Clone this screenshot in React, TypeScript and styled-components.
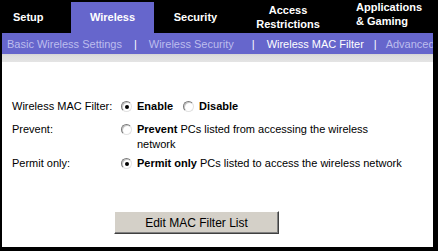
import React from "react";
import styled, { createGlobalStyle } from "styled-components";

const GlobalStyle = createGlobalStyle`
  html, body { margin: 0; padding: 0; background: #ffffff; }
  body { font-family: "Liberation Sans", Arial, sans-serif; }
  * { box-sizing: border-box; }
`;

const Page = styled.div`
  width: 438px;
  height: 251px;
  background: #000000;
  display: flex;
  flex-direction: column;
  overflow: hidden;
`;

const TabBar = styled.div`
  height: 33px;
  display: flex;
  align-items: flex-start;
  flex: none;
`;

const Tab = styled.div<{ $w: number; $active?: boolean; $pt: number; $align?: string; $pl?: number }>`
  width: ${(p) => p.$w}px;
  height: ${(p) => (p.$active ? 31 : 33)}px;
  margin-top: ${(p) => (p.$active ? 2 : 0)}px;
  padding-top: ${(p) => p.$pt}px;
  padding-left: ${(p) => p.$pl ?? 0}px;
  text-align: ${(p) => p.$align ?? "center"};
  background: ${(p) => (p.$active ? "#6666cc" : "#000000")};
  color: #ffffff;
  font-weight: bold;
  font-size: 11px;
  line-height: ${(p) => (p.$pt < 8 ? 13.5 : 14)}px;
  white-space: nowrap;
  flex: none;
`;

const Body = styled.div`
  flex: 1;
  margin: 0 5px 4px 2px;
  background: #ffffff;
  display: flex;
  flex-direction: column;
`;

const SubNav = styled.div`
  height: 21px;
  background: #6666cc;
  display: flex;
  align-items: center;
  padding-left: 5px;
  font-size: 11px;
  line-height: 14px;
  white-space: nowrap;
  overflow: hidden;
  flex: none;
`;

const NavItem = styled.span<{ $current?: boolean }>`
  color: ${(p) => (p.$current ? "#ffffff" : "#bdbdee")};
`;

const Sep = styled.span<{ $l: number; $r: number }>`
  color: #ffffff;
  margin: 0 ${(p) => p.$r}px 0 ${(p) => p.$l}px;
`;

const Band = styled.div`
  height: 8px;
  flex: none;
  background: linear-gradient(#d4d4d4 0, #dedede 2px, #e4e4e4 100%);
`;

const Content = styled.div`
  padding: 37px 0 0 10px;
  font-size: 11px;
  line-height: 14px;
  color: #000000;
`;

const Row = styled.div<{ $mt: number; $lh?: number }>`
  display: grid;
  grid-template-columns: 109px 1fr;
  margin-top: ${(p) => p.$mt}px;
  line-height: ${(p) => p.$lh ?? 14}px;
`;

const Label = styled.div``;

const Control = styled.div`
  display: flex;
  align-items: flex-start;
`;

const Radio = styled.span<{ $checked?: boolean; $ml?: number }>`
  width: 11px;
  height: 11px;
  margin-top: 2px;
  margin-left: ${(p) => p.$ml ?? 0}px;
  margin-right: 5px;
  border-radius: 50%;
  background: #ffffff;
  border: 1px solid;
  border-color: #7a7a7a #e2e2e2 #e2e2e2 #7a7a7a;
  box-shadow: inset 1px 1px 0 #c8c8c8;
  display: flex;
  align-items: center;
  justify-content: center;
  flex: none;
  &::after {
    content: "";
    width: 4px;
    height: 4px;
    border-radius: 50%;
    background: ${(p) => (p.$checked ? "#000000" : "transparent")};
  }
`;

const Strong = styled.b`
  font-weight: bold;
`;

const Text = styled.span``;

const Button = styled.button`
  margin: 41px 0 0 102px;
  width: 165px;
  height: 23px;
  background: #d4d0c8;
  border: 1px solid;
  border-color: #ffffff #404040 #404040 #ffffff;
  box-shadow: inset -1px -1px 0 #808080;
  font-family: "Liberation Sans", Arial, sans-serif;
  font-size: 12px;
  color: #000000;
  padding: 0;
  display: block;
`;

export default function App() {
  return (
    <>
      <GlobalStyle />
      <Page>
        <TabBar>
          <Tab $w={71} $pt={10} $align="left" $pl={13}>Setup</Tab>
          <Tab $w={83} $pt={8} $active>Wireless</Tab>
          <Tab $w={83} $pt={10}>Security</Tab>
          <Tab $w={102} $pt={4}>
            Access
            <br />
            Restrictions
          </Tab>
          <Tab $w={99} $pt={1} $align="left" $pl={17}>
            Applications
            <br />
            &amp; Gaming
          </Tab>
        </TabBar>
        <Body>
          <SubNav>
            <NavItem>Basic Wireless Settings</NavItem>
            <Sep $l={12} $r={12}>|</Sep>
            <NavItem>Wireless Security</NavItem>
            <Sep $l={18} $r={12}>|</Sep>
            <NavItem $current>Wireless MAC Filter</NavItem>
            <Sep $l={10} $r={9}>|</Sep>
            <NavItem>Advanced Wireless Settings</NavItem>
          </SubNav>
          <Band />
          <Content>
            <Row $mt={0}>
              <Label>Wireless MAC Filter:</Label>
              <Control>
                <Radio $checked />
                <Strong>Enable</Strong>
                <Radio $ml={10} />
                <Strong>Disable</Strong>
              </Control>
            </Row>
            <Row $mt={9} $lh={15}>
              <Label>Prevent:</Label>
              <Control>
                <Radio />
                <Text>
                  <Strong>Prevent</Strong> PCs listed from accessing the wireless
                  <br />
                  network
                </Text>
              </Control>
            </Row>
            <Row $mt={4}>
              <Label>Permit only:</Label>
              <Control>
                <Radio $checked />
                <Text>
                  <Strong>Permit only</Strong> PCs listed to access the wireless network
                </Text>
              </Control>
            </Row>
            <Button>Edit MAC Filter List</Button>
          </Content>
        </Body>
      </Page>
    </>
  );
}
